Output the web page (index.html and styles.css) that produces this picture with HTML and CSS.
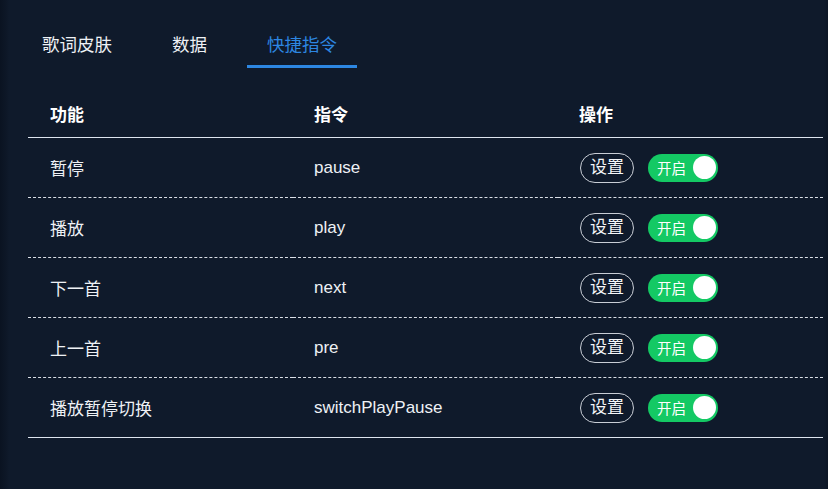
FILE: index.html
```html
<!DOCTYPE html>
<html lang="zh-CN">
<head>
<meta charset="utf-8">
<link rel="stylesheet" href="styles.css">
</head>
<body>
<div class="panel">
  <nav class="tabs">
    <div class="tab">歌词皮肤</div>
    <div class="tab">数据</div>
    <div class="tab active">快捷指令</div>
  </nav>
  <table class="cmd-table">
    <thead>
      <tr><th>功能</th><th>指令</th><th>操作</th></tr>
    </thead>
    <tbody>
      <tr><td>暂停</td><td>pause</td><td><div class="ops"><span class="btn">设置</span><span class="switch"><span class="switch-text">开启</span><span class="knob"></span></span></div></td></tr>
      <tr><td>播放</td><td>play</td><td><div class="ops"><span class="btn">设置</span><span class="switch"><span class="switch-text">开启</span><span class="knob"></span></span></div></td></tr>
      <tr><td>下一首</td><td>next</td><td><div class="ops"><span class="btn">设置</span><span class="switch"><span class="switch-text">开启</span><span class="knob"></span></span></div></td></tr>
      <tr><td>上一首</td><td>pre</td><td><div class="ops"><span class="btn">设置</span><span class="switch"><span class="switch-text">开启</span><span class="knob"></span></span></div></td></tr>
      <tr class="last"><td>播放暂停切换</td><td>switchPlayPause</td><td><div class="ops"><span class="btn">设置</span><span class="switch"><span class="switch-text">开启</span><span class="knob"></span></span></div></td></tr>
    </tbody>
  </table>
</div>
</body>
</html>
```
FILE: styles.css
```css
html, body {
  margin: 0;
  padding: 0;
  height: 100%;
}
body {
  background: linear-gradient(to right, #0a1321 0, #0d1727 6px, #0f1a2b 9px, #0f1a2b 824px, #0c1625 828px);
  font-family: "Liberation Sans", "Noto Sans CJK SC", sans-serif;
  color: #f2f4f7;
  overflow: hidden;
}
.panel {
  padding: 26px 0 0 22px;
}
.tabs {
  display: flex;
  gap: 20px;
}
.tab {
  font-size: 17.5px;
  line-height: 39px;
  padding: 0 20px;
  color: #eef1f5;
  border-bottom: 3px solid transparent;
}
.tab.active {
  color: #2d87e2;
  border-bottom-color: #2d87e2;
}
.cmd-table {
  margin: 21px 0 0 6px;
  width: 795px;
  border-collapse: separate;
  border-spacing: 0;
  table-layout: fixed;
  font-size: 17px;
}
.cmd-table th,
.cmd-table td {
  text-align: left;
  padding: 0 0 0 21px;
  height: 59px;
  vertical-align: middle;
}
.cmd-table th {
  height: 48px;
  font-weight: bold;
  color: #ffffff;
  font-size: 17px;
  border-bottom: 1px solid #dde4ee;
}
.cmd-table td {
  color: #eef1f5;
  border-bottom: 1px dashed #d9dee6;
}
.cmd-table th:first-child,
.cmd-table td:first-child {
  padding-left: 22px;
}
.cmd-table td:last-child {
  padding-left: 22px;
}
.cmd-table tr.last td {
  border-bottom: 1px solid #dde4ee;
}
.ops {
  display: flex;
  align-items: center;
  gap: 14px;
}
.btn {
  box-sizing: border-box;
  height: 30px;
  line-height: 28px;
  padding: 0 9px;
  border: 1px solid #c9ced6;
  border-radius: 15px;
  font-size: 17px;
  color: #f4f6f9;
}
.switch {
  box-sizing: border-box;
  width: 70px;
  height: 28px;
  border-radius: 14px;
  background: #14c964;
  display: flex;
  align-items: center;
  justify-content: space-between;
  padding: 0 2px 0 9px;
}
.switch-text {
  font-size: 14.5px;
  color: #ffffff;
}
.knob {
  width: 23px;
  height: 23px;
  border-radius: 50%;
  background: #ffffff;
}
```
